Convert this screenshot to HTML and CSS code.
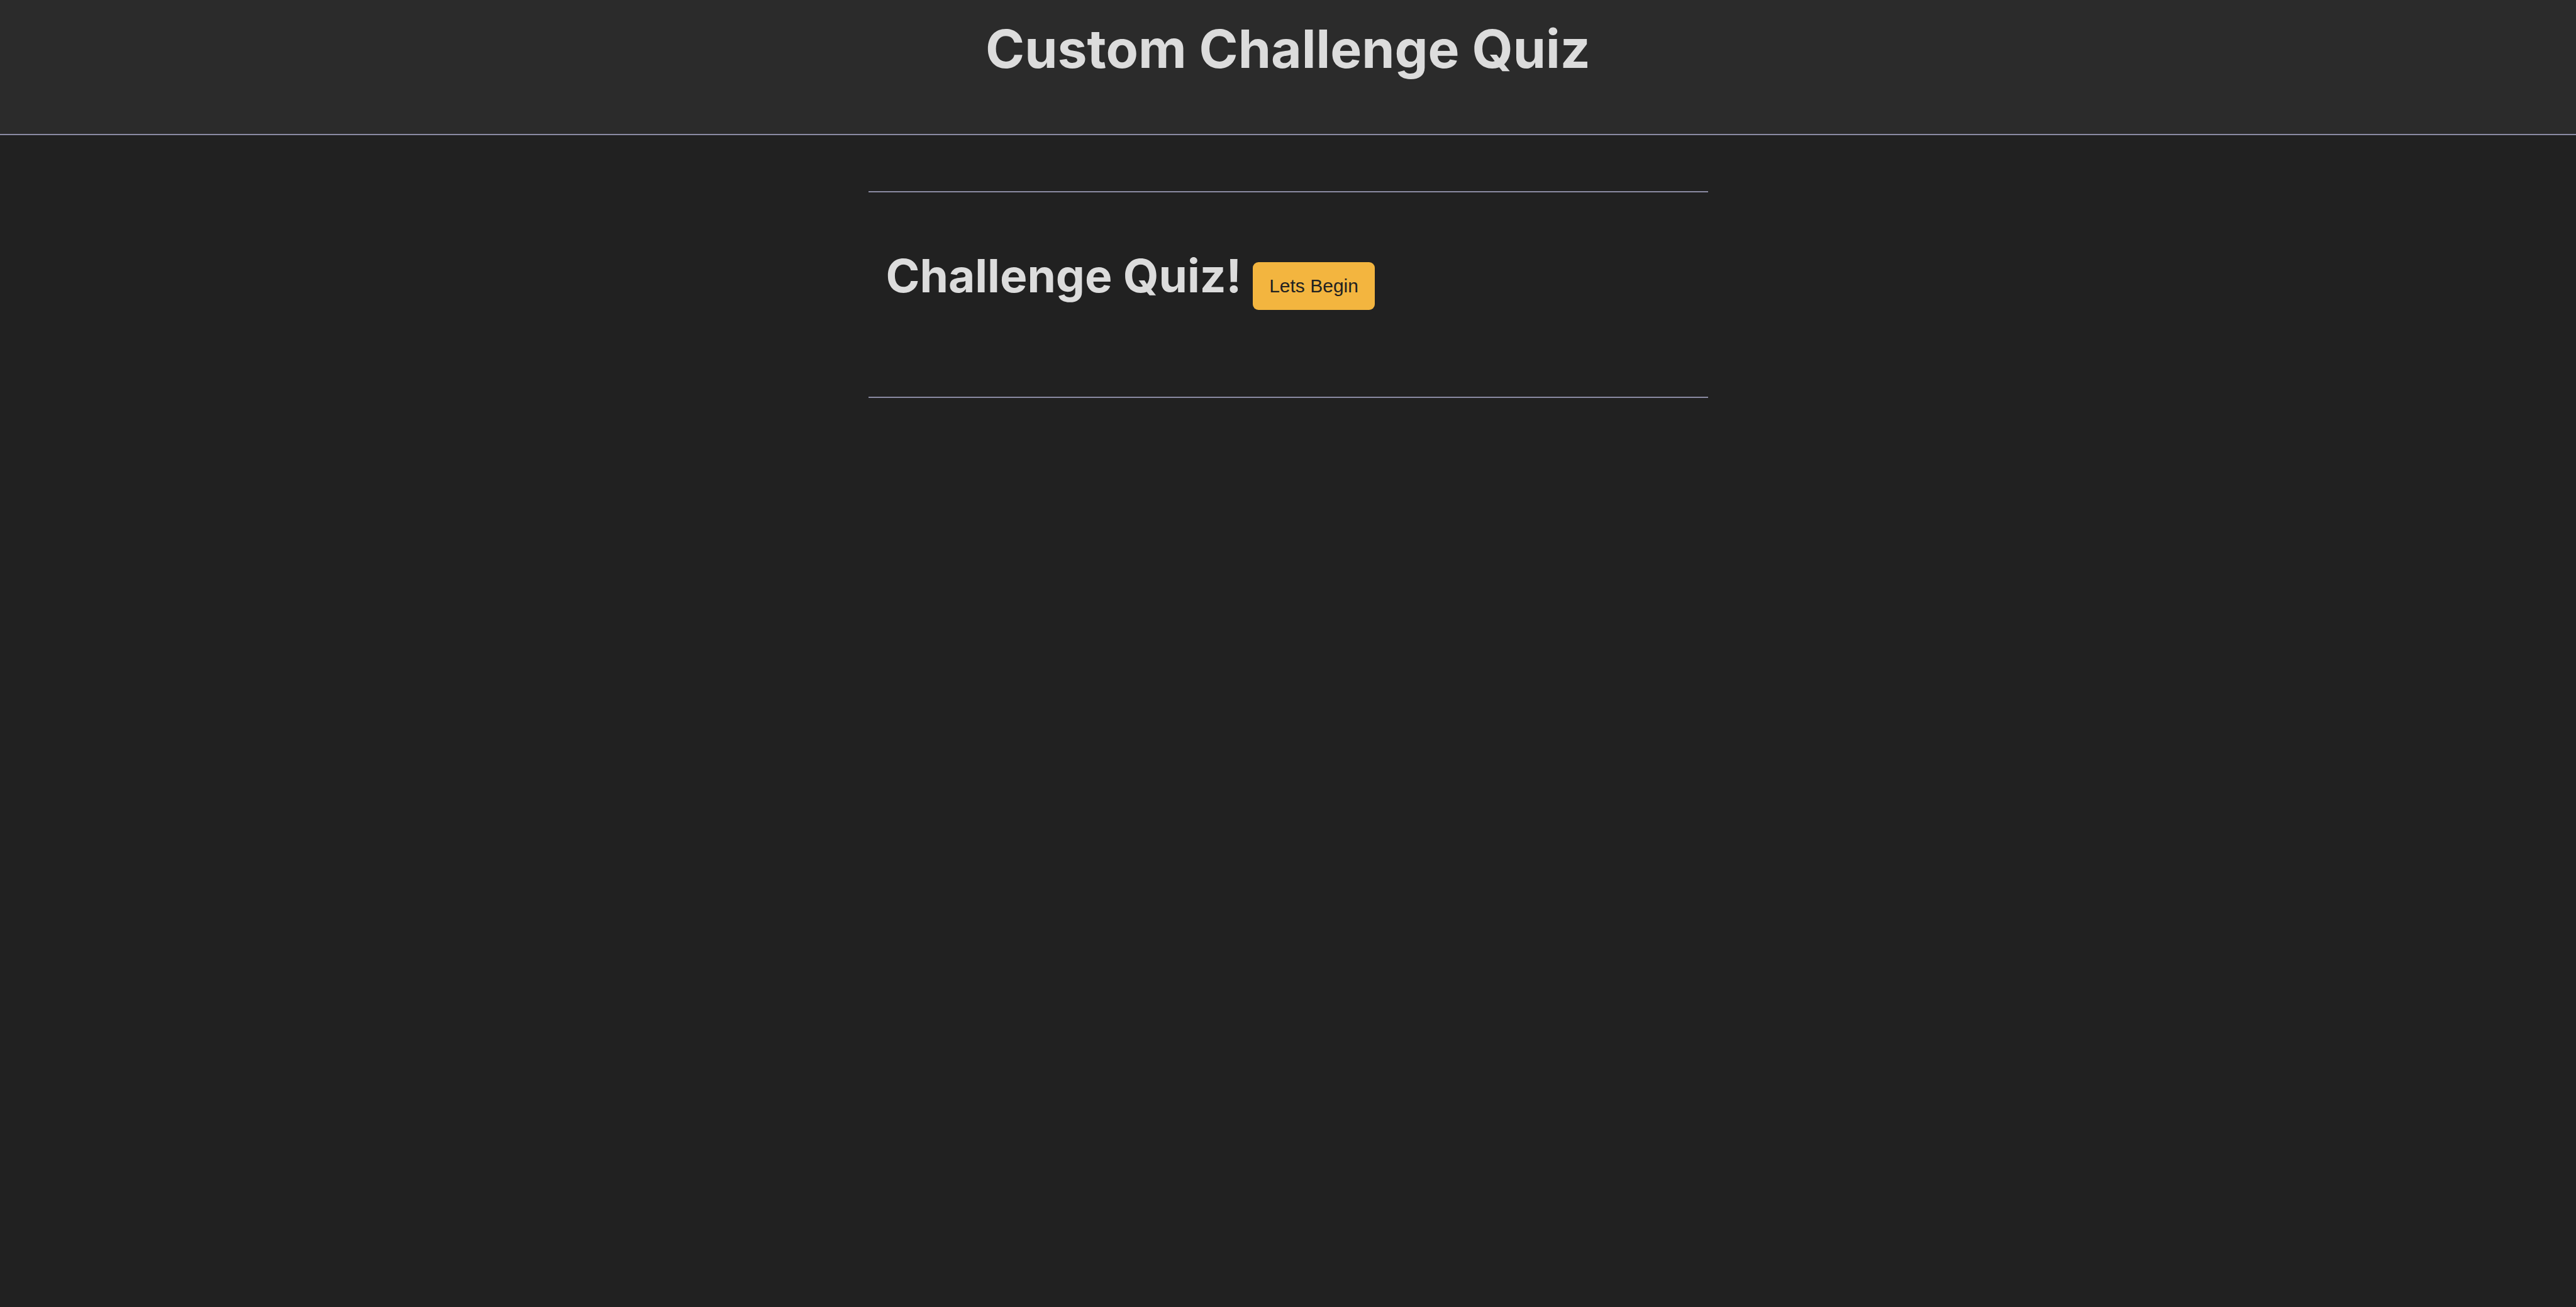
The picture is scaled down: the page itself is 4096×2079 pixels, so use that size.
FILE: index.html
```html
<!DOCTYPE html>
<html lang="en">
<head>
<meta charset="utf-8">
<meta name="viewport" content="width=device-width, initial-scale=1">
<title>Custom Challenge Quiz</title>
<link rel="stylesheet" href="styles.css">
</head>
<body>
<header class="site-header">
<h1 class="site-title">Custom Challenge Quiz</h1>
</header>
<main class="quiz">
<section class="intro">
<h2 class="intro-title">Challenge Quiz!</h2>
<button class="start-button" type="button">Lets Begin</button>
</section>
</main>
</body>
</html>
```

FILE: styles.css
```css
* {
  box-sizing: border-box;
}

body {
  margin: 0;
  min-height: 100vh;
  background: #212121;
  color: #dcdcdc;
  font-family: Inter, "Liberation Sans", sans-serif;
}

.site-header {
  padding: 25px 16px 83px;
  background: #2b2b2b;
  border-bottom: 2px solid #8b8ba3;
  text-align: center;
}

.site-title {
  margin: 0;
  font-size: 84px;
  line-height: 105px;
  font-weight: 700;
}

.quiz {
  max-width: 1335px;
  margin: 89px auto 0;
  border-top: 2px solid #8b8ba3;
  border-bottom: 2px solid #8b8ba3;
}

.intro {
  display: flex;
  align-items: baseline;
  gap: 18px;
  padding: 89px 28px 138px;
}

.intro-title {
  margin: 0;
  font-size: 73px;
  line-height: 88px;
  font-weight: 700;
}

.start-button {
  padding: 20px 26px;
  border: 0;
  border-radius: 9px;
  background: #f3b53f;
  color: #212121;
  font-family: "Liberation Sans", sans-serif;
  font-size: 30px;
  line-height: 36px;
  cursor: pointer;
}
```
